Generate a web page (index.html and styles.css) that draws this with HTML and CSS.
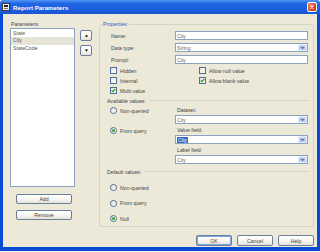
FILE: index.html
```html
<!DOCTYPE html>
<html lang="en">
  <head>
    <meta charset="UTF-8" />
    <title>Report Parameters</title>
    <link rel="stylesheet" href="styles.css">
  </head>
  <body>
    <div class="window">
      <div class="titlebar">
        <svg class="app-icon" viewBox="0 0 8 8" width="8" height="8">
          <rect x="0.5" y="0.5" width="7" height="7" fill="#f4f4f4" stroke="#3a3a3a" />
          <rect x="2" y="2" width="4" height="2" fill="#222" />
          <rect x="2" y="5" width="4" height="1" fill="#777" />
        </svg>
        <span class="title">Report Parameters</span>
        <span class="close">
          <svg viewBox="0 0 10 10" width="10" height="10">
            <path d="M3 3 L7 7 M7 3 L3 7" stroke="#fff" stroke-width="1.4" />
          </svg>
        </span>
      </div>
      <div class="content">
        <div class="main">
          <div class="params">
            <div class="caption">Parameters:</div>
            <ul class="list">
              <li>State</li>
              <li class="sel">City</li>
              <li>StateCode</li>
            </ul>
            <button class="btn wide add">Add</button>
            <button class="btn wide remove">Remove</button>
          </div>
          <div class="arrows">
            <button class="btn small">
              <svg viewBox="0 0 4 3" width="3" height="3"><path d="M2 0 L4 3 L0 3 Z" fill="#000" /></svg>
            </button>
            <button class="btn small">
              <svg viewBox="0 0 4 3" width="3" height="3"><path d="M0 0 L4 0 L2 3 Z" fill="#000" /></svg>
            </button>
          </div>
          <fieldset class="group">
            <legend>Properties:</legend>
            <div class="form">
              <label>Name:</label>
              <div class="field">City</div>
              <label>Data type:</label>
              <div class="field combo"><span>String</span><span class="drop"></span></div>
              <label>Prompt:</label>
              <div class="field">City</div>
            </div>
            <div class="checks">
              <div class="check"><span class="box"></span>Hidden</div>
              <div class="check"><span class="box"></span>Allow null value</div>
              <div class="check"><span class="box"></span>Internal</div>
              <div class="check"><span class="box on"></span>Allow blank value</div>
              <div class="check"><span class="box on"></span>Multi-value</div>
            </div>
            <div class="section">Available values:</div>
            <div class="avail">
              <div class="radios">
                <div class="radio"><span class="dot"></span>Non-queried</div>
                <div class="radio"><span class="dot on"></span>From query</div>
              </div>
              <div class="fields">
                <label>Dataset:</label>
                <div class="field combo"><span>City</span><span class="drop"></span></div>
                <label>Value field:</label>
                <div class="field combo"><span class="hl">City</span><span class="drop"></span></div>
                <label>Label field:</label>
                <div class="field combo"><span>City</span><span class="drop"></span></div>
              </div>
            </div>
            <div class="section default">Default values:</div>
            <div class="radios defaults">
              <div class="radio"><span class="dot"></span>Non-queried</div>
              <div class="radio"><span class="dot"></span>From query</div>
              <div class="radio"><span class="dot on"></span>Null</div>
            </div>
          </fieldset>
        </div>
        <div class="footer">
          <button class="btn foot ok">OK</button>
          <button class="btn foot">Cancel</button>
          <button class="btn foot">Help</button>
        </div>
      </div>
    </div>
  </body>
</html>
```

FILE: styles.css
```css
* {
  box-sizing: border-box;
}
body {
  margin: 0;
  background-color: #f0f0f0;
  font-family: "Liberation Sans", Arial, sans-serif;
  font-size: 5.2px;
  color: #444;
}
.window {
  width: 320px;
  height: 251px;
  display: flex;
  flex-direction: column;
  background-color: #0a4ad8;
  border-radius: 4px 4px 0 0;
}
.titlebar {
  height: 14px;
  display: flex;
  align-items: center;
  padding: 0 3px 0 2px;
  border-radius: 4px 4px 0 0;
  background: linear-gradient(#5096f6, #2266e2 25%, #1a5ddf 70%, #1c55cf);
}
.app-icon {
  margin-right: 3px;
}
.title {
  color: #fff;
  font-weight: bold;
  font-size: 6.2px;
}
.close {
  margin-left: auto;
  width: 10px;
  height: 10px;
  border: 1px solid #fff;
  border-radius: 2px;
  background: linear-gradient(135deg, #f08a65, #d84a22 60%, #c23a16);
  display: flex;
  align-items: center;
  justify-content: center;
}
.close svg {
  width: 8px;
  height: 8px;
}
.content {
  flex: 1;
  margin: 0 3px 4px 3px;
  padding: 6px 3px 1px 7px;
  background-color: #ece9d8;
  display: flex;
  flex-direction: column;
}
.main {
  display: flex;
  align-items: flex-start;
}
.params {
  width: 65px;
  display: flex;
  flex-direction: column;
}
.caption {
  height: 8px;
  line-height: 8px;
  padding-left: 1px;
}
.list {
  margin: 0;
  padding: 0.5px 0 0;
  list-style: none;
  height: 159px;
  background-color: #fff;
  border: 1px solid #8ba3c0;
}
.list li {
  line-height: 7.5px;
  padding-left: 2px;
  color: #555;
}
.list .sel {
  background-color: #e6e3d7;
}
.btn {
  padding: 0;
  font-family: inherit;
  font-size: inherit;
  color: #444;
  border: 1px solid #6a7f9a;
  border-radius: 2px;
  background: linear-gradient(#ffffff, #f5f4f0 60%, #e4e0d6);
  display: flex;
  align-items: center;
  justify-content: center;
}
.wide {
  width: 56px;
  height: 10px;
  margin-left: 6px;
}
.add {
  margin-top: 7px;
}
.remove {
  margin-top: 6px;
}
.arrows {
  margin: 10px 0 0 5px;
  display: flex;
  flex-direction: column;
  gap: 4px;
}
.small {
  width: 12px;
  height: 11px;
}
.group {
  margin: 0 0 0 7px;
  width: 215px;
  min-width: 0;
  padding: 3px 5px 4px 8px;
  border: 1px solid #d6d3c4;
  border-radius: 3px;
}
.group legend {
  padding: 0 1px;
  margin-left: -6px;
  line-height: 8px;
  color: #2b5fd0;
}
.form {
  display: grid;
  grid-template-columns: 67px 1fr;
  row-gap: 3px;
  align-items: center;
}
.form label {
  padding-left: 3px;
}
.field {
  height: 9px;
  padding-left: 1px;
  background-color: #fff;
  border: 1px solid #8ba3c0;
  display: flex;
  align-items: center;
  color: #666;
}
.drop {
  margin-left: auto;
  width: 9px;
  height: 7px;
  border: 1px solid #e3ebfd;
  border-radius: 1px;
  background: linear-gradient(#d4e0fc, #b7cbf7);
  display: flex;
  align-items: center;
  justify-content: center;
}
.drop::after {
  content: "";
  width: 2px;
  height: 2px;
  border-right: 1px solid #4d6185;
  border-bottom: 1px solid #4d6185;
  transform: translateY(-0.5px) rotate(45deg);
}
.hl {
  background-color: #316ac5;
  color: #fff;
  padding: 0 1px;
  line-height: 6px;
}
.checks {
  margin-top: 3px;
  display: grid;
  grid-template-columns: 89px 1fr;
  row-gap: 3px;
}
.check,
.radio {
  height: 7px;
  margin-left: 2px;
  display: flex;
  align-items: center;
  gap: 3px;
}
.box {
  width: 7px;
  height: 7px;
  border: 1px solid #4f6f94;
  background: linear-gradient(135deg, #e2e2dc, #fff);
}
.box.on {
  background: url("data:image/svg+xml,%3Csvg xmlns='http://www.w3.org/2000/svg' viewBox='0 0 5 5'%3E%3Cpath d='M0.8 2.4 L2 3.6 L4.3 1' fill='none' stroke='%2321a121' stroke-width='1.2'/%3E%3C/svg%3E") center / 5px 5px no-repeat,
    linear-gradient(135deg, #e2e2dc, #fff);
}
.dot {
  width: 7px;
  height: 7px;
  border: 1px solid #4f6f94;
  border-radius: 50%;
  background: linear-gradient(135deg, #e2e2dc, #fff);
  display: flex;
  align-items: center;
  justify-content: center;
}
.dot.on::after {
  content: "";
  width: 3px;
  height: 3px;
  border-radius: 50%;
  background-color: #2aa52a;
}
.section {
  height: 7px;
  margin: 3px 0 0 -1px;
  display: flex;
  align-items: center;
  gap: 3px;
}
.section::after {
  content: "";
  flex: 1;
  height: 1px;
  background-color: #d6d3c4;
}
.section.default {
  margin-top: 4px;
}
.avail {
  margin-top: 3px;
  display: flex;
}
.avail .radios {
  width: 67px;
  display: flex;
  flex-direction: column;
  gap: 13px;
}
.fields {
  flex: 1;
  display: flex;
  flex-direction: column;
}
.fields label {
  height: 7px;
  line-height: 7px;
  padding-left: 2px;
  margin-bottom: 1px;
}
.fields .field {
  margin-bottom: 3px;
}
.fields .field:last-child {
  margin-bottom: 0;
}
.defaults {
  margin-top: 9px;
  display: flex;
  flex-direction: column;
  gap: 8.5px;
}
.footer {
  margin-top: 8px;
  display: flex;
  justify-content: flex-end;
  gap: 5px;
}
.foot {
  width: 36px;
  height: 11px;
}
.ok {
  box-shadow: inset 0 0 0 1px #7aa4e6;
}
```
